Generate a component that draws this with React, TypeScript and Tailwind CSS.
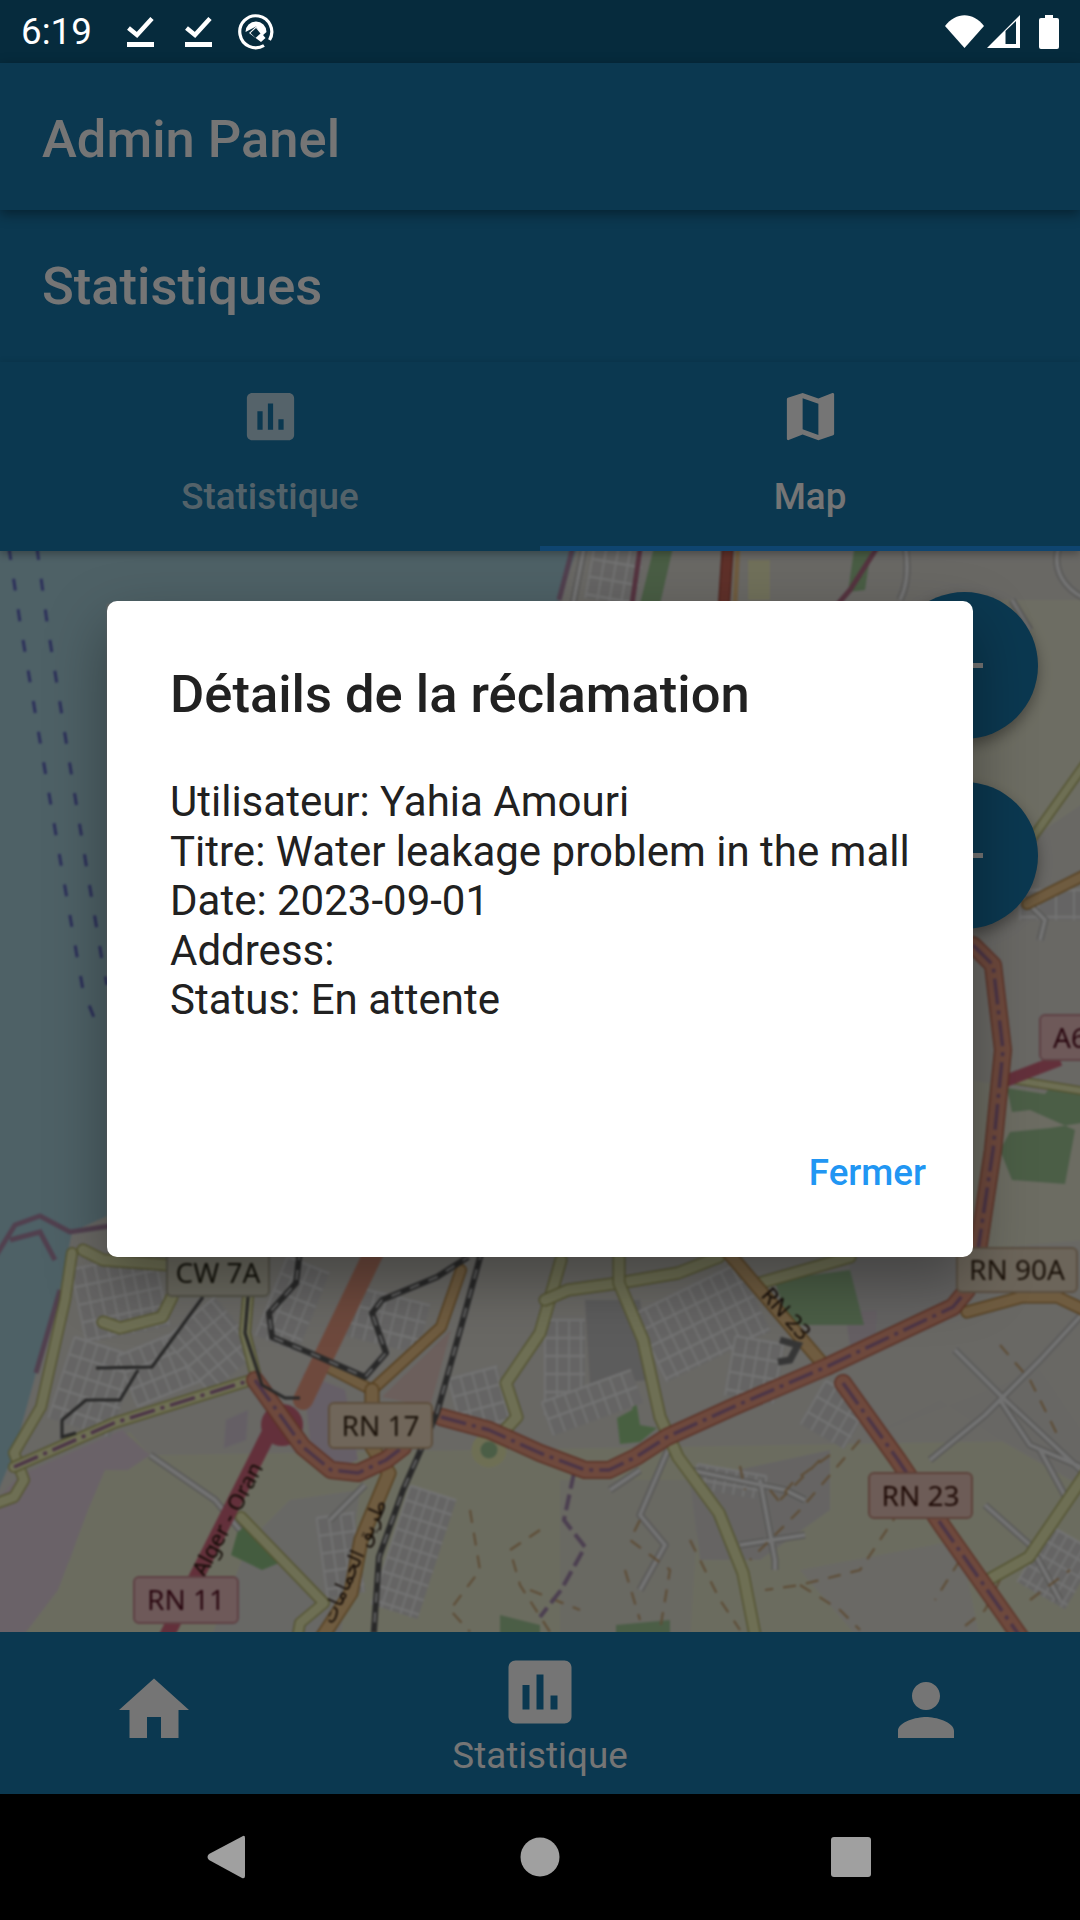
const trunk = "#f0a085";
const trunkEdge = "#c46a52";
const sec = "#f0f2b8";
const secEdge = "#b5b56a";
const orange = "#f2c88c";
const orangeEdge = "#b98a45";

const paths = {
  assessment:
    "M19 3H5c-1.1 0-2 .9-2 2v14c0 1.1.9 2 2 2h14c1.1 0 2-.9 2-2V5c0-1.1-.9-2-2-2zM9 17H7v-7h2v7zm4 0h-2V7h2v10zm4 0h-2v-4h2v4z",
  map: "M20.5 3l-.16.03L15 5.1 9 3 3.36 4.9c-.21.07-.36.25-.36.48V20.5c0 .28.22.5.5.5l.16-.03L9 18.9l6 2.1 5.64-1.9c.21-.07.36-.25.36-.48V3.5c0-.28-.22-.5-.5-.5zM15 19l-6-2.11V5l6 2.11V19z",
  home: "M10 20v-6h4v6h5v-8h3L12 3 2 12h3v8z",
  person:
    "M12 12c2.21 0 4-1.79 4-4s-1.79-4-4-4-4 1.79-4 4 1.79 4 4 4zm0 2c-2.67 0-8 1.34-8 4v2h16v-2c0-2.66-5.33-4-8-4z",
};

function Icon({ d, className }: { d: string; className: string }) {
  return (
    <svg viewBox="0 0 24 24" fill="currentColor" className={className}>
      <path d={d} />
    </svg>
  );
}

function CheckIcon() {
  return (
    <svg viewBox="0 0 27 30" className="w-[27px] h-[30px]" fill="none">
      <path d="M1.5 11 L10 18 L25 1.5" stroke="#fff" strokeWidth="4.5" />
      <rect x="0" y="25" width="27" height="5" fill="#fff" />
    </svg>
  );
}

function StatusBar() {
  return (
    <div className="h-[63px] bg-[#062b3d] flex items-center text-white relative">
      <span className="ml-[21px] w-[106px] pt-[1px] text-[36.75px] leading-none">6:19</span>
      <div className="flex items-center mt-[1px]">
        <CheckIcon />
        <div className="w-[31px]" />
        <CheckIcon />
        <svg viewBox="0 0 36 36" className="w-[36px] h-[36px] ml-[26px]" fill="none">
          <path d="M26 31.5 A16 16 0 1 1 31.5 26" stroke="#fff" strokeWidth="3.2" />
          <path d="M7.5 18 A10.5 10.5 0 0 1 28.5 18 L24 22 L18 12.5 Z" fill="#fff" />
          <path d="M11 19 L18 12.5 L27.5 24 L23 28 Z" fill="#fff" />
          <path d="M12.5 19 L18 14 L22.5 19.5 L17.5 24 Z" fill="#062b3d" />
        </svg>
      </div>
      <div className="ml-auto flex items-center mr-[21px]">
        <svg viewBox="0 0 39 33" className="w-[39px] h-[33px]">
          <path d="M0 11 C11 -3.5 28 -3.5 39 11 L19.5 33 Z" fill="#fff" />
        </svg>
        <svg viewBox="0 0 33 33" className="w-[33px] h-[33px] ml-[3px]">
          <path fillRule="evenodd" d="M33 0 V33 H0 Z M29 6 L18.5 16 V29 H29 Z" fill="#fff" />
        </svg>
        <svg viewBox="0 0 20 34" className="w-[20px] h-[34px] ml-[19px]">
          <path d="M6 0 H14 V3 H18 Q20 3 20 5 V32 Q20 34 18 34 H2 Q0 34 0 32 V5 Q0 3 2 3 H6 Z" fill="#fff" />
        </svg>
      </div>
    </div>
  );
}

function Road({ d, w, fill, edge, dash }: { d: string; w: number; fill: string; edge: string; dash?: string }) {
  return (
    <g fill="none" strokeLinejoin="round" strokeLinecap="round">
      <path d={d} stroke={edge} strokeWidth={w + 3} />
      <path d={d} stroke={fill} strokeWidth={w} />
      {dash && <path d={d} stroke="#a5749a" strokeWidth={3.5} strokeDasharray="26 6 4 6" strokeLinecap="butt" />}
    </g>
  );
}

function Rail({ d, w = 6 }: { d: string; w?: number }) {
  return (
    <g fill="none" strokeLinejoin="round">
      <path d={d} stroke="#5a5a5a" strokeWidth={w} />
      <path d={d} stroke="#ddd" strokeWidth={w - 4} strokeDasharray="10 10" />
    </g>
  );
}

function Streets({ x, y, w, h, rot, step = 12 }: { x: number; y: number; w: number; h: number; rot: number; step?: number }) {
  const vs: number[] = [];
  const hs: number[] = [];
  for (let i = 0; i <= w; i += step) vs.push(i);
  for (let i = 0; i <= h; i += Math.round(step * 1.5)) hs.push(i);
  return (
    <g transform={`rotate(${rot} ${x + w / 2} ${y + h / 2})`}>
      <rect x={x} y={y} width={w} height={h} fill="#dcdbd9" />
      {vs.map((v) => (
        <line key={`v${v}`} x1={x + v} y1={y} x2={x + v} y2={y + h} stroke="#f8f8f8" strokeWidth="2" />
      ))}
      {hs.map((v) => (
        <line key={`h${v}`} x1={x} y1={y + v} x2={x + w} y2={y + v} stroke="#f8f8f8" strokeWidth="2.4" />
      ))}
    </g>
  );
}

function Shield({ x, y, w, h, bg, edge, color, label }: { x: number; y: number; w: number; h: number; bg: string; edge: string; color: string; label: string }) {
  return (
    <g>
      <rect x={x} y={y} width={w} height={h} rx="5" fill={bg} stroke={edge} strokeWidth="2" />
      <text x={x + w / 2} y={y + h / 2 + 10} textAnchor="middle" fontSize="28" fill={color}>
        {label}
      </text>
    </g>
  );
}

const whiteRoads = [
  "M585 543 L573 604",
  "M905 543 C910 575 905 590 900 600",
  "M1060 543 C1050 570 1065 590 1088 600",
  "M955 1350 L1000 1395 L1088 1477",
  "M1088 1308 L1040 1360 L985 1415 L930 1460",
  "M1000 1400 L1030 1445 L1088 1470",
  "M690 1470 L785 1490 L805 1500",
  "M760 1480 L775 1560 L775 1570",
  "M740 1545 L805 1535",
  "M668 1450 L640 1515 L665 1545 L640 1590",
  "M610 1490 L640 1470",
  "M985 1505 L1030 1545 L1060 1600",
  "M150 1455 L215 1500 L240 1530",
  "M1040 1450 L1070 1505",
  "M365 1485 L330 1520",
  "M1012 600 L1030 630",
  "M1005 880 L1045 920 L1040 940",
];

const tracks = [
  "M740 1466 L745 1490 M820 1460 L795 1485 L780 1500",
  "M830 1455 L795 1480 L778 1500 L770 1490",
  "M860 1440 L800 1510 L750 1560",
  "M900 1510 L860 1570 L800 1585 L765 1590",
  "M800 1585 L840 1610 L860 1630",
  "M640 1520 L630 1540 L670 1570 L660 1630",
  "M625 1570 L640 1620 M690 1540 L720 1600 L740 1630",
  "M470 1510 L480 1570 L450 1610 L470 1632",
  "M540 1530 L510 1550 L520 1585 L550 1632",
  "M530 1590 L580 1610 M1000 1345 L1030 1380 L1060 1440",
  "M960 1560 L935 1600 M1000 1580 L985 1610 L960 1630",
  "M1030 1600 L1070 1570",
];

// drawn 8px past the map on every side so the blur doesn't fade the edges
function MapCanvas() {
  return (
    <svg viewBox="-8 543 1096 1097" className="block w-[1096px] h-[1097px] -m-[8px] max-w-none blur-[1px] font-['Noto_Sans',sans-serif]">
      <rect x="-8" y="543" width="1096" height="1097" fill="#e4e2db" />
      <path d="M-8 543 H579 L558 604 L107 604 V1216 L72 1232 L60 1290 L36 1373 L14 1453 L-8 1505 Z" fill="#aad3df" />
      <path d="M-8 1262 L15 1225 L40 1216 L70 1232 L110 1226 M10 1240 L40 1232 L55 1260 M574 543 L559 600 M60 1290 L36 1373" fill="none" stroke="#b08cab" strokeWidth="5" />
      <path d="M20 1475 L130 1432 L150 1455 L1088 1440 V1640 H20 L70 1560 L90 1500 Z" fill="#eaecd0" />
      <path d="M-8 1505 L20 1475 L122 1430 L150 1455 L128 1470 L105 1470 L88 1510 L58 1590 L20 1640 H-8 Z" fill="#e7d6e2" />
      <path d="M290 1500 L360 1490 L340 1640 L210 1640 L250 1540 Z" fill="#e3e2dd" />
      <path d="M560 1480 L700 1480 L690 1640 L560 1640 Z" fill="#e3e1d8" opacity="0.7" />
      <path d="M690 1480 L830 1450 L830 1510 L760 1560 L700 1560 Z" fill="#dedbd8" />
      <path d="M800 1570 L960 1540 L980 1640 L860 1640 Z" fill="#e7e5dc" />
      <path d="M860 1440 L1040 1370 L1088 1440 V1490 L1000 1440 L940 1400 Z" fill="#e3e1db" />
      <path d="M973 600 L1088 600 V800 L1000 860 L973 850 Z" fill="#eeeed7" />
      <path d="M973 1080 L1088 1100 V1240 L973 1250 Z" fill="#ebebd6" />
      <path d="M850 1257 L965 1257 L950 1310 L880 1345 L850 1330 Z" fill="#d9d8d6" />
      <path d="M585 1300 L640 1300 L650 1380 L590 1385 Z" fill="#c9c8c8" />
      <path d="M303 1373 L345 1390 L358 1460 L330 1470 L310 1440 Z" fill="#dfcfe0" />
      <path d="M382 1397 L451 1330 L430 1407 Z" fill="#eccfc8" />
      <path d="M226 1420 L248 1410 L246 1440 L224 1448 Z" fill="#dcd0dd" />
      <path d="M845 1312 L877 1310 L875 1345 L850 1345 Z" fill="#dccfd8" />
      <path d="M774 1280 L850 1270 L864 1325 L810 1325 L790 1325 Z" fill="#a4cc9a" />
      <path d="M617 1418 L632 1410 L635 1395 L640 1425 L657 1428 L640 1442 L620 1444 Z" fill="#9ed28e" />
      <path d="M240 1523 L279 1563 L262 1570 L231 1555 Z" fill="#95c98a" />
      <path d="M500 1615 L540 1625 V1640 H500 Z M616 1625 L670 1620 V1640 H616 Z" fill="#a4cc9a" />
      <path d="M1007 1088 L1045 1094 L1052 1085 L1088 1090 V1122 L1050 1128 L1010 1132 L1000 1150 L1012 1180 L1065 1184 L1075 1130 L1030 1110 L1012 1112 Z" fill="#a4cc9a" />
      <path d="M655 543 L674 543 L660 604 L640 604 Z M855 543 H872 L865 590 L848 592 Z" fill="#9fca94" />
      <rect x="748" y="560" width="22" height="40" fill="#f4f3c4" />

      <Streets x={78} y={1260} w={85} h={75} rot={-12} />
      <Streets x={60} y={1345} w={65} h={85} rot={18} />
      <Streets x={125} y={1340} w={75} h={55} rot={-22} />
      <Streets x={180} y={1310} w={65} h={70} rot={-40} />
      <Streets x={270} y={1262} w={45} h={85} rot={22} />
      <Streets x={345} y={1295} w={80} h={50} rot={14} />
      <Streets x={322} y={1515} w={38} h={80} rot={-8} />
      <Streets x={390} y={1490} w={48} h={125} rot={18} step={10} />
      <Streets x={455} y={1372} w={50} h={55} rot={-15} />
      <Streets x={545} y={1320} w={40} h={95} rot={0} />
      <Streets x={645} y={1285} w={115} h={75} rot={-26} />
      <Streets x={545} y={1385} w={95} h={35} rot={-20} />
      <Streets x={730} y={1340} w={50} h={60} rot={10} />
      <Streets x={810} y={1390} w={50} h={50} rot={30} />
      <Streets x={1030} y={1535} w={55} h={65} rot={30} step={10} />
      <Streets x={695} y={1470} w={70} h={24} rot={10} step={10} />
      <Streets x={590} y={545} w={50} h={58} rot={10} />
      <Streets x={1020} y={890} w={70} h={30} rot={0} step={18} />

      <path d={whiteRoads.join(" ")} fill="none" stroke="#bcbbb8" strokeWidth="7" strokeLinejoin="round" />
      <path d={whiteRoads.join(" ")} fill="none" stroke="#f8f8f8" strokeWidth="4" strokeLinejoin="round" />
      <path d={tracks.join(" ")} fill="none" stroke="#cba777" strokeWidth="2.2" strokeDasharray="13 10" />
      <path d="M574 1473 L564 1520 L585 1547 L561 1590 L540 1617" fill="none" stroke="#a58aaf" strokeWidth="4" strokeDasharray="16 6" />

      <path d="M641 543 L632 604 M880 543 L850 590 L838 604" fill="none" stroke="#b8708a" strokeWidth="5" />
      <Road d="M728 543 L724 604" w={9} fill="#cf6a5a" edge="#a84a40" />
      <path d="M738 543 L735 604" fill="none" stroke={orange} strokeWidth="5" />

      <Road d="M72 1253 L65 1300 L41 1407 L14 1453 L24 1480 L14 1497 L-8 1505" w={9} fill={sec} edge={secEdge} />
      <Road d="M83 1250 L103 1260 L170 1265 M172 1297 L162 1317 L120 1328 L103 1322" w={10} fill={sec} edge={secEdge} />
      <Road d="M14 1467 L114 1423 L251 1380" w={9} fill={sec} edge={secEdge} dash="y" />
      <Road d="M248 1297 L245 1333 L255 1373" w={9} fill={sec} edge={secEdge} />
      <Road d="M241 1517 L324 1603 L300 1623 L296 1645" w={9} fill={sec} edge={secEdge} />
      <Road d="M489 1447 L517 1417 L506 1383 L540 1333 L561 1260" w={10} fill={sec} edge={secEdge} />
      <Road d="M545 1300 L568 1290 L619 1283 L678 1273 L719 1257" w={10} fill={sec} edge={secEdge} />
      <Road d="M619 1257 L619 1283 L643 1340 L660 1417 L678 1457 L719 1513 L743 1573 L757 1645" w={10} fill={sec} edge={secEdge} />
      <Road d="M760 1283 L850 1257" w={10} fill={sec} edge={secEdge} />
      <Road d="M988 1580 L1029 1557 L1095 1460" w={10} fill={sec} edge={secEdge} />
      <Road d="M1033 837 L1095 750" w={7} fill={sec} edge={secEdge} />
      <Road d="M1003 1078 L1095 1093" w={6} fill={sec} edge={secEdge} />
      <circle cx="489" cy="1450" r="13" fill="#a4cc9a" stroke={sec} strokeWidth="9" />

      <Road d="M320 1363 L372 1390 L441 1327 L461 1270" w={9} fill={orange} edge={orangeEdge} />
      <Road d="M372 1390 L372 1447 L389 1473 L361 1540 L351 1593 L317 1645" w={12} fill={orange} edge={orangeEdge} />
      <Road d="M726 1250 L822 1363" w={11} fill={orange} edge={orangeEdge} />
      <Road d="M967 1312 L1022 1297 L1057 1297 L1095 1315" w={10} fill={orange} edge={orangeEdge} />
      <Road d="M1027 904 L1095 870" w={9} fill={orange} edge={orangeEdge} />

      <path d="M269 1433 L162 1645" fill="none" stroke="#d76a80" strokeWidth="15" />
      <circle cx="282" cy="1425" r="21" fill="#d76a80" />
      <path d="M1060 1060 L1003 1082" fill="none" stroke="#d76a80" strokeWidth="12" />

      <Road d="M303 1400 L375 1250" w={17} fill={trunk} edge={trunk} />
      <Road d="M255 1380 L303 1447 L331 1470 L358 1473 L386 1460 L403 1447" w={15} fill={trunk} edge={trunkEdge} dash="y" />
      <Road d="M441 1417 L489 1430 L540 1453 L585 1470 L609 1470 L636 1457 L667 1437 L733 1407 L826 1367 L919 1323 L953 1307 L967 1290 L974 1250" w={15} fill={trunk} edge={trunkEdge} dash="y" />
      <Road d="M843 1383 L898 1460 L943 1527 L1026 1645" w={15} fill={trunk} edge={trunkEdge} dash="y" />
      <Road d="M973 945 L993 965 L1003 1050 L993 1150 L978 1250" w={15} fill={trunk} edge={trunkEdge} dash="y" />

      <Rail d="M482 1250 L461 1327 L437 1413 L403 1490 L379 1557 L373 1645" />
      <Rail d="M300 1250 L296 1283 L269 1313 L272 1337 L310 1353 L365 1377 L386 1353 L372 1313 L382 1300 L437 1277 L468 1257" />
      <path d="M203 1297 L152 1367 L96 1368 M138 1370 L120 1400 L86 1400 L62 1420 L62 1437 L76 1433" fill="none" stroke="#555" strokeWidth="3" />
      <path d="M248 1297 L245 1333 L262 1385 L285 1398 L300 1398" fill="none" stroke="#555" strokeWidth="3" />
      <path d="M780 1340 L798 1345 L790 1360 L778 1362" fill="none" stroke="#777" strokeWidth="7" />

      <path d="M9 548 L20 622 L41 747 L62 870 L78 962 L83 990 L95 1020" fill="none" stroke="#6068c4" strokeWidth="3" strokeDasharray="12 19" />
      <path d="M37 548 L47 622 L67 747 L87 870 L102 960 L107 985" fill="none" stroke="#6068c4" strokeWidth="3" strokeDasharray="12 19" />

      <text transform="translate(205 1578) rotate(-62)" fontSize="22" fill="#2b1a10">Alger - Oran</text>
      <text transform="translate(760 1296) rotate(48)" fontSize="22" fill="#2b1a10">RN 23</text>
      <text transform="translate(333 1625) rotate(-66)" fontSize="20" fill="#2b1a10" fontFamily="DejaVu Sans">طريق الحمامات</text>

      <Shield x={167} y={1250} w={102} h={46} bg="#e8e5cf" edge="#b5b29a" color="#2e2c1b" label="CW 7A" />
      <Shield x={329} y={1403} w={103} h={45} bg="#f4dfc4" edge="#c9a982" color="#3d2a18" label="RN 17" />
      <Shield x={134} y={1577} w={104} h={46} bg="#efc3c3" edge="#cc8d94" color="#5a0f22" label="RN 11" />
      <Shield x={869} y={1473} w={103} h={45} bg="#eec9bd" edge="#c98f7f" color="#43170e" label="RN 23" />
      <Shield x={957} y={1248} w={120} h={44} bg="#ecdcc4" edge="#c3ab8d" color="#3d2a18" label="RN 90A" />
      <Shield x={1040} y={1015} w={60} h={45} bg="#efc3c3" edge="#cc8d94" color="#5a0f22" label="A6" />
    </svg>
  );
}

function Fab({ top }: { top: string }) {
  return (
    <div className={`absolute left-[891px] ${top} w-[147px] h-[147px] rounded-full bg-[#187aae] shadow-[0_6px_14px_rgba(0,0,0,0.35)] flex items-center justify-center`}>
      <div className="w-[37px] h-[5px] bg-white" />
    </div>
  );
}

export default function App() {
  return (
    <div className="relative w-[1080px] h-[1920px] overflow-hidden bg-black font-['Roboto',sans-serif]">
      <StatusBar />

      <div className="flex flex-col h-[1731px]">
        <div className="relative z-10 h-[147px] shrink-0 pl-[42px] pt-[5px] flex items-center bg-[#187aae] shadow-[0_4px_12px_rgba(0,0,0,0.4)]">
          <h1 className="text-[52.5px] font-medium text-white">Admin Panel</h1>
        </div>
        <div className="h-[152px] shrink-0 pl-[42px] flex items-center bg-[#187aae]">
          <h2 className="text-[52.5px] font-medium text-white">Statistiques</h2>
        </div>
        <div className="relative z-10 h-[189px] shrink-0 grid grid-cols-2 bg-[#187aae] shadow-[0_3px_8px_rgba(0,0,0,0.3)]">
          <div className="flex flex-col items-center pt-[23px] text-white/70">
            <Icon d={paths.assessment} className="w-[63px] h-[63px]" />
            <span className="mt-[27px] text-[36.75px] leading-[43px] font-medium">Statistique</span>
          </div>
          <div className="flex flex-col items-center pt-[23px] text-white border-b-[5px] border-[#2196f3]">
            <Icon d={paths.map} className="w-[63px] h-[63px]" />
            <span className="mt-[27px] text-[36.75px] leading-[43px] font-medium">Map</span>
          </div>
        </div>
        <div className="relative h-[1081px] shrink-0 overflow-hidden">
          <MapCanvas />
        </div>
        <div className="h-[162px] shrink-0 bg-[#187aae] px-[112px] flex justify-between text-white">
          <Icon d={paths.home} className="w-[84px] h-[84px] mt-[36px]" />
          <div className="w-[84px] flex flex-col items-center mt-[18px]">
            <Icon d={paths.assessment} className="w-[84px] h-[84px] shrink-0" />
            <span className="text-[36.75px] leading-[43px] whitespace-nowrap">Statistique</span>
          </div>
          <Icon d={paths.person} className="w-[84px] h-[84px] mt-[36px]" />
        </div>
      </div>

      {/* FABs sit on the map, under the scrim */}
      <Fab top="top-[592px]" />
      <Fab top="top-[782px]" />

      <div className="absolute z-20 left-0 right-0 top-[63px] h-[1731px] bg-black/[0.54] flex items-center justify-center">
        <div className="w-[866px] h-[656px] bg-white rounded-[10px] shadow-[0_24px_60px_rgba(0,0,0,0.35)] flex flex-col">
          <h3 className="pt-[63px] pl-[63px] text-[52.5px] leading-[61.5px] font-medium text-[#212121]">Détails de la réclamation</h3>
          <div className="pt-[52px] pl-[63px] text-[42px] leading-[49.6px] text-[#212121] whitespace-nowrap">
            <p>Utilisateur: Yahia Amouri</p>
            <p>Titre: Water leakage problem in the mall</p>
            <p>Date: 2023-09-01</p>
            <p>Address:</p>
            <p>Status: En attente</p>
          </div>
          <div className="mt-auto h-[147px] pb-[21px] pr-[47px] flex items-center justify-end">
            <button className="text-[36.75px] font-medium text-[#2196f3]">Fermer</button>
          </div>
        </div>
      </div>

      <div className="absolute bottom-0 left-0 right-0 h-[126px] bg-black flex items-center">
        <svg viewBox="0 0 1080 126" className="w-full h-full" fill="#a0a0a0">
          <path d="M243 42 Q245 41 245 44 V82 Q245 85 242 84 L209 66 Q206 63 209 60 Z" />
          <circle cx="540" cy="63" r="19.5" />
          <rect x="831" y="43" width="40" height="40" rx="3" />
        </svg>
      </div>
    </div>
  );
}
